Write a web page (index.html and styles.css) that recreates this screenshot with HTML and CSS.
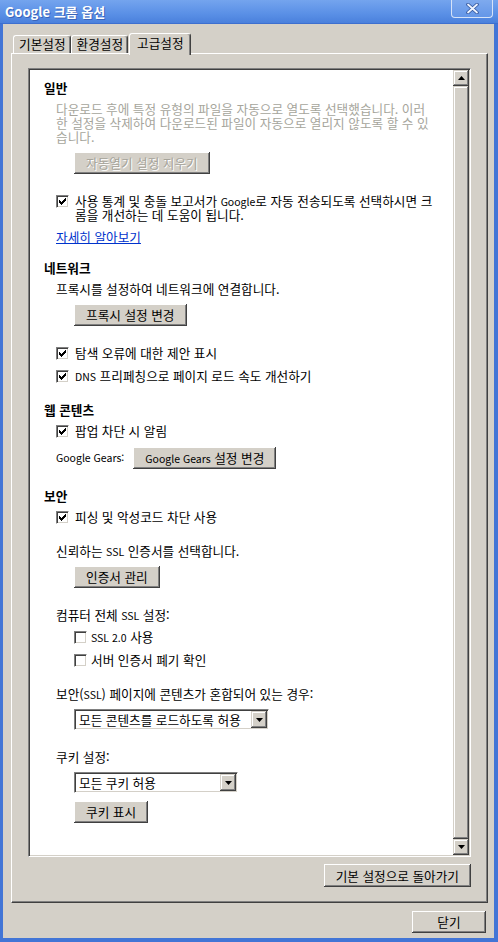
FILE: index.html
```html
<!DOCTYPE html>
<html lang="ko">
<head>
<meta charset="utf-8">
<title>Google 크롬 옵션</title>
<link rel="stylesheet" href="styles.css">
</head>
<body>
<div class="window">
  <div class="titlebar">
    <span class="title">Google 크롬 옵션</span>
    <span class="close-x">
      <svg width="13" height="11" viewBox="0 0 13 11"><path d="M2 1.5 L11 9.5 M11 1.5 L2 9.5" stroke="#35589f" stroke-width="3.6" stroke-linecap="round" fill="none"/><path d="M2 1.5 L11 9.5 M11 1.5 L2 9.5" stroke="#eef4ff" stroke-width="1.8" stroke-linecap="round" fill="none"/></svg>
    </span>
  </div>
  <div class="frame">
    <div class="tabs">
      <div class="tab">기본설정</div>
      <div class="tab">환경설정</div>
      <div class="tab active">고급설정</div>
    </div>
    <div class="panel">
      <div class="scrollbox">
        <div class="content">
          <section class="sec">
            <h2>일반</h2>
            <div class="indent">
              <p class="muted"><span class="line">다운로드 후에 특정 유형의 파일을 자동으로 열도록 선택했습니다. 이러</span><span class="line">한 설정을 삭제하여 다운로드된 파일이 자동으로 열리지 않도록 할 수 있</span><span class="line">습니다.</span></p>
              <button class="btn btn-in" disabled>자동열기 설정 지우기</button>
              <div class="check-row group">
                <span class="cb checked"><svg width="7" height="7" viewBox="0 0 7 7"><path d="M6 0h1v3h-1z M5 1h1v3h-1z M4 2h1v3h-1z M3 3h1v3h-1z M2 4h1v3h-1z M1 3h1v3h-1z M0 2h1v3h-1z" fill="#000"/></svg></span>
                <span class="label"><span class="line">사용 통계 및 충돌 보고서가 <span class="latin">Google</span>로 자동 전송되도록 선택하시면 크</span><span class="line">롬을 개선하는 데 도움이 됩니다.</span></span>
              </div>
              <a class="link" href="#">자세히 알아보기</a>
            </div>
          </section>

          <section class="sec">
            <h2>네트워크</h2>
            <div class="indent">
              <p>프록시를 설정하여 네트워크에 연결합니다.</p>
              <button class="btn btn-in">프록시 설정 변경</button>
              <div class="check-row group">
                <span class="cb checked"><svg width="7" height="7" viewBox="0 0 7 7"><path d="M6 0h1v3h-1z M5 1h1v3h-1z M4 2h1v3h-1z M3 3h1v3h-1z M2 4h1v3h-1z M1 3h1v3h-1z M0 2h1v3h-1z" fill="#000"/></svg></span>
                <span class="label">탐색 오류에 대한 제안 표시</span>
              </div>
              <div class="check-row">
                <span class="cb checked"><svg width="7" height="7" viewBox="0 0 7 7"><path d="M6 0h1v3h-1z M5 1h1v3h-1z M4 2h1v3h-1z M3 3h1v3h-1z M2 4h1v3h-1z M1 3h1v3h-1z M0 2h1v3h-1z" fill="#000"/></svg></span>
                <span class="label"><span class="latin">DNS</span> 프리페칭으로 페이지 로드 속도 개선하기</span>
              </div>
            </div>
          </section>

          <section class="sec">
            <h2>웹 콘텐츠</h2>
            <div class="indent">
              <div class="check-row">
                <span class="cb checked"><svg width="7" height="7" viewBox="0 0 7 7"><path d="M6 0h1v3h-1z M5 1h1v3h-1z M4 2h1v3h-1z M3 3h1v3h-1z M2 4h1v3h-1z M1 3h1v3h-1z M0 2h1v3h-1z" fill="#000"/></svg></span>
                <span class="label">팝업 차단 시 알림</span>
              </div>
              <div class="field-row">
                <span class="field-label">Google Gears:</span>
                <button class="btn"><span class="latin">Google Gears</span> 설정 변경</button>
              </div>
            </div>
          </section>

          <section class="sec">
            <h2>보안</h2>
            <div class="indent">
              <div class="check-row">
                <span class="cb checked"><svg width="7" height="7" viewBox="0 0 7 7"><path d="M6 0h1v3h-1z M5 1h1v3h-1z M4 2h1v3h-1z M3 3h1v3h-1z M2 4h1v3h-1z M1 3h1v3h-1z M0 2h1v3h-1z" fill="#000"/></svg></span>
                <span class="label">피싱 및 악성코드 차단 사용</span>
              </div>
              <p class="group">신뢰하는 <span class="latin">SSL</span> 인증서를 선택합니다.</p>
              <button class="btn btn-in">인증서 관리</button>
              <p class="group">컴퓨터 전체 <span class="latin">SSL</span> 설정:</p>
              <div class="check-row sub">
                <span class="cb"></span>
                <span class="label"><span class="latin">SSL 2.0</span> 사용</span>
              </div>
              <div class="check-row sub">
                <span class="cb"></span>
                <span class="label">서버 인증서 폐기 확인</span>
              </div>
              <p class="group">보안(<span class="latin">SSL</span>) 페이지에 콘텐츠가 혼합되어 있는 경우:</p>
              <div class="select select-mixed">
                <span class="select-value">모든 콘텐츠를 로드하도록 허용</span>
                <span class="select-btn"><svg width="7" height="4" viewBox="0 0 7 4"><path d="M0 0h7l-3.5 4z" fill="#000"/></svg></span>
              </div>
              <p class="group">쿠키 설정:</p>
              <div class="select select-cookie">
                <span class="select-value">모든 쿠키 허용</span>
                <span class="select-btn"><svg width="7" height="4" viewBox="0 0 7 4"><path d="M0 0h7l-3.5 4z" fill="#000"/></svg></span>
              </div>
              <button class="btn btn-in">쿠키 표시</button>
            </div>
          </section>
        </div>
        <div class="scrollbar">
          <span class="sb-btn"><svg width="7" height="4" viewBox="0 0 7 4"><path d="M3.5 0L7 4H0z" fill="#000"/></svg></span>
          <span class="sb-thumb"></span>
          <span class="sb-btn"><svg width="7" height="4" viewBox="0 0 7 4"><path d="M0 0h7l-3.5 4z" fill="#000"/></svg></span>
        </div>
      </div>
      <div class="panel-foot">
        <button class="btn btn-reset">기본 설정으로 돌아가기</button>
      </div>
    </div>
    <div class="dialog-foot">
      <button class="btn btn-close">닫기</button>
    </div>
  </div>
</div>
</body>
</html>
```

FILE: styles.css
```css
* { box-sizing: border-box; }
html, body { margin: 0; padding: 0; }
body {
  width: 498px;
  height: 942px;
  overflow: hidden;
  background: #d4d0c8;
  color: #000;
  font-family: "Noto Sans CJK KR", "Noto Sans", sans-serif;
  font-size: 12.65px;
  line-height: 14px;
}
.window { display: flex; flex-direction: column; height: 942px; }
.latin { font-size: 10.5px; line-height: 0; }
.line { display: block; height: 14px; }

/* title bar */
.titlebar {
  flex: none;
  height: 24px;
  display: flex;
  align-items: flex-start;
  background: linear-gradient(#74a4ee, #5a90e6 60%, #4a80dc);
  border-bottom: 1px solid #3d6fcf;
}
.title {
  margin: 4px 0 0 5px;
  font-size: 13px;
  line-height: 16px;
  font-weight: bold;
  color: #fff;
  text-shadow: 1px 1px 0 #3a64b8;
}
.close-x {
  margin-left: auto;
  margin-right: 5px;
  width: 42px;
  height: 18px;
  display: flex;
  align-items: center;
  justify-content: center;
  border: 1px solid #d6e3f8;
  border-top: none;
  border-radius: 0 0 4px 4px;
  background: linear-gradient(#7eaaee, #6496e8);
}

/* window frame */
.frame {
  flex: 1;
  display: flex;
  flex-direction: column;
  min-height: 0;
  padding: 9px 6px 5px 8px;
  border-left: 3px solid #4275d6;
  border-right: 4px solid #4275d6;
  border-bottom: 4px solid #4275d6;
  background: #d4d0c8;
}

/* tabs */
.tabs {
  flex: none;
  height: 20px;
  display: flex;
  align-items: flex-end;
  padding-left: 2px;
  position: relative;
  z-index: 1;
}
.tab {
  height: 18px;
  padding: 0 4px 0 5px;
  line-height: 15px;
  background: #d4d0c8;
  border: 1px solid;
  border-color: #fff #404040 transparent #fff;
  border-bottom: none;
  border-radius: 3px 3px 0 0;
  box-shadow: inset -1px 0 0 #808080;
}
.tab.active {
  height: 22px;
  margin-bottom: -2px;
  margin-left: 1px;
  padding: 0 6px 0 7px;
  line-height: 17px;
}

/* panel */
.panel {
  flex: 1;
  min-height: 0;
  display: flex;
  flex-direction: column;
  padding: 14px 16px 15px 16px;
  border: 1px solid;
  border-color: #fff #404040 #404040 #fff;
  box-shadow: inset -1px -1px 0 #808080;
}

.scrollbox {
  flex: 1;
  min-height: 0;
  display: flex;
  background: #fff;
  border: 1px solid;
  border-color: #808080 #fff #fff #808080;
  padding: 1px;
  box-shadow: inset 1px 1px 0 #404040, inset -1px -1px 0 #d4d0c8;
}
.content {
  flex: 1;
  min-width: 0;
  overflow: hidden;
  padding: 11px 0 0 14px;
}

.scrollbar {
  flex: none;
  width: 16px;
  display: flex;
  flex-direction: column;
}
.sb-btn, .sb-thumb, .select-btn {
  background: #d4d0c8;
  box-shadow: inset -1px -1px 0 #404040, inset 1px 1px 0 #d4d0c8, inset -2px -2px 0 #808080, inset 2px 2px 0 #fff;
}
.sb-btn {
  flex: none;
  height: 16px;
  display: flex;
  align-items: center;
  justify-content: center;
}
.sb-thumb { flex: 1; }

/* sections */
.sec h2 {
  margin: 0;
  font-size: 12.65px;
  line-height: 14px;
  font-weight: bold;
}
.sec + .sec { margin-top: 20px; }
.indent {
  margin-top: 7px;
  padding-left: 12px;
  display: flex;
  flex-direction: column;
  align-items: flex-start;
}
.indent > * + * { margin-top: 8px; }
.indent > .group { margin-top: 20px; }
.indent > .check-row + .check-row { margin-top: 9px; }
.indent > .field-row { margin-top: 9px; }

p { margin: 0; white-space: nowrap; }
.muted { color: #a6a59c; }

/* buttons */
.btn {
  font: inherit;
  color: #000;
  height: 22px;
  padding: 0 12px;
  line-height: 20px;
  border: 0;
  background: #d4d0c8;
  box-shadow: inset -1px -1px 0 #404040, inset 1px 1px 0 #fff, inset -2px -2px 0 #808080, inset 2px 2px 0 #d4d0c8;
  white-space: nowrap;
}
.btn:disabled { color: #a6a49a; text-shadow: 1px 1px 0 #fff; }
.btn-in { margin-left: 18px; }
.btn-reset { height: 23px; }
.btn-close { min-width: 74px; }

/* checkboxes */
.check-row {
  display: flex;
  align-items: flex-start;
  white-space: nowrap;
}
.cb {
  flex: none;
  width: 13px;
  height: 13px;
  margin: 1px 6px 0 0;
  display: flex;
  align-items: center;
  justify-content: center;
  background: #fff;
  border: 1px solid;
  border-color: #808080 #fff #fff #808080;
  box-shadow: inset 1px 1px 0 #404040, inset -1px -1px 0 #d4d0c8;
}
.check-row.sub { margin-left: 18px; }
.check-row.sub .cb { margin-right: 4px; }

.link { color: #0033cc; text-decoration: underline; margin-bottom: -3px; }

.field-row { display: flex; align-items: center; gap: 9px; }
.field-label { font-size: 10.5px; line-height: 14px; white-space: nowrap; }

/* combo boxes */
.select {
  margin-left: 18px;
  height: 21px;
  display: flex;
  padding: 1px;
  background: #fff;
  border: 1px solid;
  border-color: #808080 #fff #fff #808080;
  box-shadow: inset 1px 1px 0 #404040, inset -1px -1px 0 #d4d0c8;
}
.select-mixed { width: 195px; }
.select-cookie { width: 164px; }
.select-value {
  flex: 1;
  padding-left: 3px;
  line-height: 17px;
  white-space: nowrap;
}
.select-btn {
  flex: none;
  width: 16px;
  height: 17px;
  display: flex;
  align-items: center;
  justify-content: center;
}

/* footers */
.panel-foot {
  flex: none;
  display: flex;
  justify-content: flex-end;
  margin-top: 7px;
}
.dialog-foot {
  flex: none;
  display: flex;
  justify-content: flex-end;
  margin-top: 8px;
  padding-right: 2px;
}
```
